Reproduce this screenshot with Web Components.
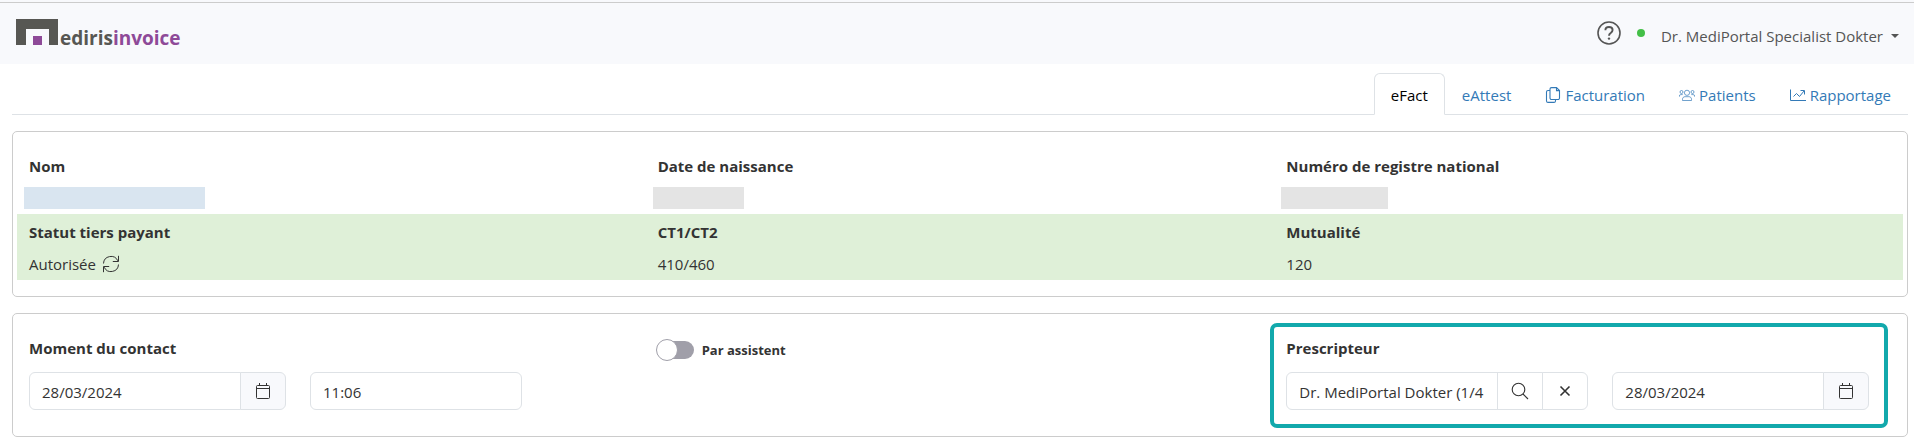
<!DOCTYPE html>
<html lang="fr">
<head>
    <meta charset="utf-8">
    <meta name="viewport" content="width=device-width, initial-scale=1">
    <title>Mediris Invoice</title>
    <style>
        body {
            margin: 0;
            background: #fff;
            color: #333;
            font-family: "Open Sans", "Noto Sans", sans-serif;
            font-size: 15px;
            line-height: 24px;
        }

        main {
            display: flex;
            flex-direction: column;
            gap: 16px;
            padding: 9px 6px 4px 12px;
        }
    </style>
</head>
<body>
    <top-bar user="Dr. MediPortal Specialist Dokter"></top-bar>
    <main>
        <tab-bar>
            <tab-link active>eFact</tab-link>
            <tab-link>eAttest</tab-link>
            <tab-link icon="files">Facturation</tab-link>
            <tab-link icon="people">Patients</tab-link>
            <tab-link icon="graph">Rapportage</tab-link>
        </tab-bar>
        <box-card>
            <info-row>
                <info-item label="Nom"><masked-value style="--width: 181px; --color: #d9e5f0"></masked-value></info-item>
                <info-item label="Date de naissance"><masked-value style="--width: 91px"></masked-value></info-item>
                <info-item label="Numéro de registre national"><masked-value style="--width: 107px"></masked-value></info-item>
            </info-row>
            <info-row success>
                <info-item label="Statut tiers payant">Autorisée <refresh-button></refresh-button></info-item>
                <info-item label="CT1/CT2">410/460</info-item>
                <info-item label="Mutualité">120</info-item>
            </info-row>
        </box-card>
        <box-card>
            <info-row form>
                <contact-moment date="28/03/2024" time="11:06"></contact-moment>
                <toggle-switch>Par assistent</toggle-switch>
                <prescriber-field name="Dr. MediPortal Dokter (1/4" date="28/03/2024"></prescriber-field>
            </info-row>
        </box-card>
    </main>

    <script>
        const icons = {
            question: `<svg width="24" height="24" viewBox="0 0 24 24" fill="none" stroke="currentColor" stroke-width="1.6" aria-hidden="true">
                <circle cx="12" cy="12" r="11"/>
                <path d="M8.4 9.2C8.4 7.2 9.9 6 12 6s3.600 1.200 3.600 3c0 1.500-.8 2.200-1.900 3C12.500 12.800 12 13.300 12 14.800" stroke-width="1.9"/>
                <circle cx="12" cy="17.600" r="1.200" fill="currentColor" stroke="none"/>
            </svg>`,
            files: `<svg width="16" height="16" viewBox="0 0 16 16" fill="none" stroke="currentColor" stroke-width="1.100" aria-hidden="true">
                <path d="M6.500.6h5l3 3v7.400a1.500 1.500 0 0 1-1.500 1.500H6.500A1.500 1.500 0 0 1 5 11V2.100A1.500 1.500 0 0 1 6.500.6zM11.500.6v3h3"/>
                <path d="M5 3.500H3A1.500 1.500 0 0 0 1.500 5v9A1.500 1.500 0 0 0 3 15.400h6A1.500 1.500 0 0 0 10.500 14v-1.500"/>
            </svg>`,
            people: `<svg width="16" height="16" viewBox="0 0 16 16" fill="none" stroke="currentColor" stroke-width=".7" aria-hidden="true">
                <circle cx="8" cy="5.800" r="2.600"/>
                <circle cx="2.500" cy="5" r="1.500"/>
                <circle cx="13.500" cy="5" r="1.500"/>
                <path d="M3.500 13.500v-1.200c0-1.600 1-2.600 2.600-2.600h3.800c1.600 0 2.600 1 2.600 2.600v1.200z"/>
                <path d="M.4 9.700V9c0-.9.500-1.400 1.400-1.400h1.900M15.600 9.700V9c0-.9-.5-1.400-1.400-1.400h-1.900"/>
            </svg>`,
            graph: `<svg width="16" height="16" viewBox="0 0 16 16" fill="none" stroke="currentColor" aria-hidden="true">
                <path d="M.5 2.500v11H16"/>
                <path d="M3.500 9.500L6.500 6.500l3 3 4.500-5.500M10.500 3.500h4v4"/>
            </svg>`,
            refresh: `<svg width="18" height="18" viewBox="0 0 18 18" fill="none" stroke="currentColor" aria-hidden="true">
                <path d="M1.500 8.500A7.500 7.500 0 0 1 15.800 5.800M16.500 9.500A7.500 7.500 0 0 1 2.200 12.200"/>
                <path d="M16.500.8v5.700h-5.700M1.500 17.200v-5.700h5.700"/>
            </svg>`,
            calendar: `<svg width="16" height="16" viewBox="0 0 16 16" fill="none" stroke="currentColor" aria-hidden="true">
                <rect x="1.500" y="2.500" width="13" height="13" rx="1"/>
                <path d="M1.500 5.500h13M4.500 0v2.500M11.500 0v2.500"/>
            </svg>`,
            search: `<svg width="18" height="18" viewBox="0 0 18 18" fill="none" stroke="currentColor" stroke-width="1.100" aria-hidden="true">
                <circle cx="7.500" cy="7.500" r="6.300"/>
                <path d="M12 12l5 5"/>
            </svg>`,
            close: `<svg width="12" height="12" viewBox="0 0 12 12" fill="none" stroke="currentColor" stroke-width="1.600" aria-hidden="true">
                <path d="M1.500 1.500l9 9M10.500 1.500l-9 9"/>
            </svg>`
        };

        // shared by every element that shows text boxes
        const fieldStyles = `
            :host {
                display: block;
            }

            .title {
                display: block;
                font-weight: 700;
                margin-bottom: 12px;
            }

            .fields {
                display: flex;
                gap: 24px;
            }

            .group {
                display: flex;
            }

            input, button {
                box-sizing: border-box;
                height: 38px;
                margin: 0;
                border: 1px solid #dee2e6;
                font: inherit;
                color: inherit;
                background: #fff;
            }

            input {
                width: 212px;
                padding: 7px 12px 5px;
                border-radius: 6px;
            }

            .group input {
                border-radius: 6px 0 0 6px;
            }

            button {
                display: flex;
                align-items: center;
                justify-content: center;
                width: 46px;
                padding: 0;
                margin-left: -1px;
            }

            button:last-child {
                border-radius: 0 6px 6px 0;
            }

            button.date {
                background: #f8f9fc;
            }
        `;

        class BaseElement extends HTMLElement {
            constructor() {
                super();
                this.attachShadow({ mode: 'open' });
            }

            connectedCallback() {
                const template = document.createElement('template');
                template.innerHTML = this.render();
                this.shadowRoot.replaceChildren(template.content.cloneNode(true));
            }
        }

        class TopBar extends BaseElement {
            render() {
                return `
                    <style>
                        :host {
                            display: flow-root;
                            background: #f8f9fc;
                        }

                        header {
                            display: flex;
                            align-items: center;
                            justify-content: space-between;
                            margin-top: 2px;
                            padding: 10px 15px 10px 16px;
                            height: 41px;
                            border-top: 1px solid #ccc;
                            color: #555;
                        }

                        .logo {
                            display: flex;
                            align-items: flex-end;
                            gap: 1px;
                            margin-bottom: 4px;
                            color: #575753;
                            font-size: 19px;
                            font-weight: 700;
                            line-height: 14px;
                            text-decoration: none;
                        }

                        .logo b {
                            color: #8e4a98;
                            font-weight: inherit;
                        }

                        .account {
                            display: flex;
                            align-items: center;
                            gap: 16px;
                        }

                        button {
                            display: flex;
                            align-items: center;
                            gap: 8px;
                            padding: 0;
                            border: 0;
                            background: none;
                            color: inherit;
                            font: inherit;
                        }

                        .help, .status {
                            margin-bottom: 2px;
                        }

                        .status {
                            width: 8px;
                            height: 8px;
                            border-radius: 50%;
                            background: #43bf47;
                        }

                        .user {
                            padding-top: 4px;
                        }

                        .user::after {
                            content: "";
                            border: 4px solid transparent;
                            border-top-color: currentColor;
                            border-bottom: 0;
                        }
                    </style>
                    <header>
                        <a class="logo" href="#" aria-label="edirisinvoice">
                            <svg width="43" height="26" viewBox="0 0 43 26" aria-hidden="true">
                                <path fill="#575753" d="M0 0h42v26h-9V10H10v16H0z"/>
                                <path fill="#8e4a98" d="M17 17h9v9h-9z"/>
                            </svg>
                            <span>ediris<b>invoice</b></span>
                        </a>
                        <div class="account">
                            <button class="help" type="button" aria-label="Aide">${icons.question}</button>
                            <span class="status"></span>
                            <button class="user" type="button">${this.getAttribute('user')}</button>
                        </div>
                    </header>
                `;
            }
        }

        class TabBar extends BaseElement {
            render() {
                return `
                    <style>
                        :host {
                            display: block;
                        }

                        nav {
                            display: flex;
                            justify-content: flex-end;
                            border-bottom: 1px solid #dee2e6;
                        }
                    </style>
                    <nav><slot></slot></nav>
                `;
            }
        }

        class TabLink extends BaseElement {
            render() {
                return `
                    <style>
                        :host {
                            display: block;
                            margin-bottom: -1px;
                        }

                        a {
                            display: flex;
                            align-items: center;
                            gap: 4px;
                            padding: 9px 16px 7px;
                            border: 1px solid transparent;
                            border-radius: 6px 6px 0 0;
                            color: #337ab7;
                            text-decoration: none;
                        }

                        :host([active]) a {
                            border-color: #dee2e6 #dee2e6 #fff;
                            background: #fff;
                            color: #000;
                        }
                    </style>
                    <a href="#">${icons[this.getAttribute('icon')] || ''}<span><slot></slot></span></a>
                `;
            }
        }

        class BoxCard extends BaseElement {
            render() {
                return `
                    <style>
                        :host {
                            display: block;
                            padding: 16px 4px;
                            border: 1px solid #ccc;
                            border-radius: 5px;
                        }
                    </style>
                    <slot></slot>
                `;
            }
        }

        class InfoRow extends BaseElement {
            render() {
                return `
                    <style>
                        :host {
                            display: grid;
                            grid-template-columns: repeat(3, 1fr);
                            padding: 6px 0 4px;
                        }

                        :host([success]) {
                            background: #dff0d8;
                        }

                        :host([form]) {
                            padding-bottom: 10px;
                        }

                        ::slotted(*) {
                            margin: 0 12px;
                        }
                    </style>
                    <slot></slot>
                `;
            }
        }

        class InfoItem extends BaseElement {
            render() {
                return `
                    <style>
                        :host {
                            display: block;
                        }

                        .label {
                            font-weight: 700;
                            margin-bottom: 8px;
                        }

                        .value {
                            display: flex;
                            align-items: center;
                            gap: 6px;
                            height: 24px;
                        }
                    </style>
                    <div class="label">${this.getAttribute('label')}</div>
                    <div class="value"><slot></slot></div>
                `;
            }
        }

        class MaskedValue extends BaseElement {
            render() {
                return `
                    <style>
                        :host {
                            display: block;
                            width: var(--width);
                            height: 22px;
                            margin-left: -5px;
                            background: var(--color, #e4e4e4);
                        }
                    </style>
                `;
            }
        }

        class RefreshButton extends BaseElement {
            render() {
                return `
                    <style>
                        :host, button {
                            display: flex;
                        }

                        button {
                            padding: 0;
                            border: 0;
                            background: none;
                            color: inherit;
                        }
                    </style>
                    <button type="button" aria-label="Actualiser">${icons.refresh}</button>
                `;
            }
        }

        class ContactMoment extends BaseElement {
            render() {
                return `
                    <style>${fieldStyles}</style>
                    <label class="title" for="date">Moment du contact</label>
                    <div class="fields">
                        <div class="group">
                            <input id="date" type="text" value="${this.getAttribute('date')}">
                            <button class="date" type="button" aria-label="Choisir une date">${icons.calendar}</button>
                        </div>
                        <input type="text" aria-label="Heure" value="${this.getAttribute('time')}">
                    </div>
                `;
            }
        }

        class ToggleSwitch extends BaseElement {
            render() {
                return `
                    <style>
                        :host {
                            display: block;
                        }

                        label {
                            display: inline-flex;
                            align-items: center;
                            gap: 8px;
                            padding-top: 2px;
                            font-size: 13px;
                            font-weight: 700;
                        }

                        input {
                            appearance: none;
                            display: flex;
                            align-items: center;
                            width: 36px;
                            height: 18px;
                            margin: 0;
                            border-radius: 9px;
                            background: #a09fa9;
                        }

                        input::before {
                            content: "";
                            box-sizing: border-box;
                            flex: none;
                            width: 22px;
                            height: 22px;
                            margin-left: -2px;
                            border: 1px solid #a09fa9;
                            border-radius: 50%;
                            background: #fff;
                        }

                        input:checked::before {
                            margin-left: 16px;
                        }
                    </style>
                    <label><input type="checkbox" role="switch"><slot></slot></label>
                `;
            }
        }

        class PrescriberField extends BaseElement {
            render() {
                return `
                    <style>
                        ${fieldStyles}

                        :host {
                            position: relative;
                            place-self: start;
                        }

                        /* highlight frame drawn over the card */
                        :host::after {
                            content: "";
                            position: absolute;
                            inset: -13px -19px -18px -16px;
                            border: 4px solid #12a9ac;
                            border-radius: 7px;
                            pointer-events: none;
                        }
                    </style>
                    <label class="title" for="name">Prescripteur</label>
                    <div class="fields">
                        <div class="group">
                            <input id="name" type="text" value="${this.getAttribute('name')}">
                            <button type="button" aria-label="Rechercher">${icons.search}</button>
                            <button type="button" aria-label="Effacer">${icons.close}</button>
                        </div>
                        <div class="group">
                            <input type="text" aria-label="Date de prescription" value="${this.getAttribute('date')}">
                            <button class="date" type="button" aria-label="Choisir une date">${icons.calendar}</button>
                        </div>
                    </div>
                `;
            }
        }

        customElements.define('top-bar', TopBar);
        customElements.define('tab-bar', TabBar);
        customElements.define('tab-link', TabLink);
        customElements.define('box-card', BoxCard);
        customElements.define('info-row', InfoRow);
        customElements.define('info-item', InfoItem);
        customElements.define('masked-value', MaskedValue);
        customElements.define('refresh-button', RefreshButton);
        customElements.define('contact-moment', ContactMoment);
        customElements.define('toggle-switch', ToggleSwitch);
        customElements.define('prescriber-field', PrescriberField);
    </script>
</body>
</html>
